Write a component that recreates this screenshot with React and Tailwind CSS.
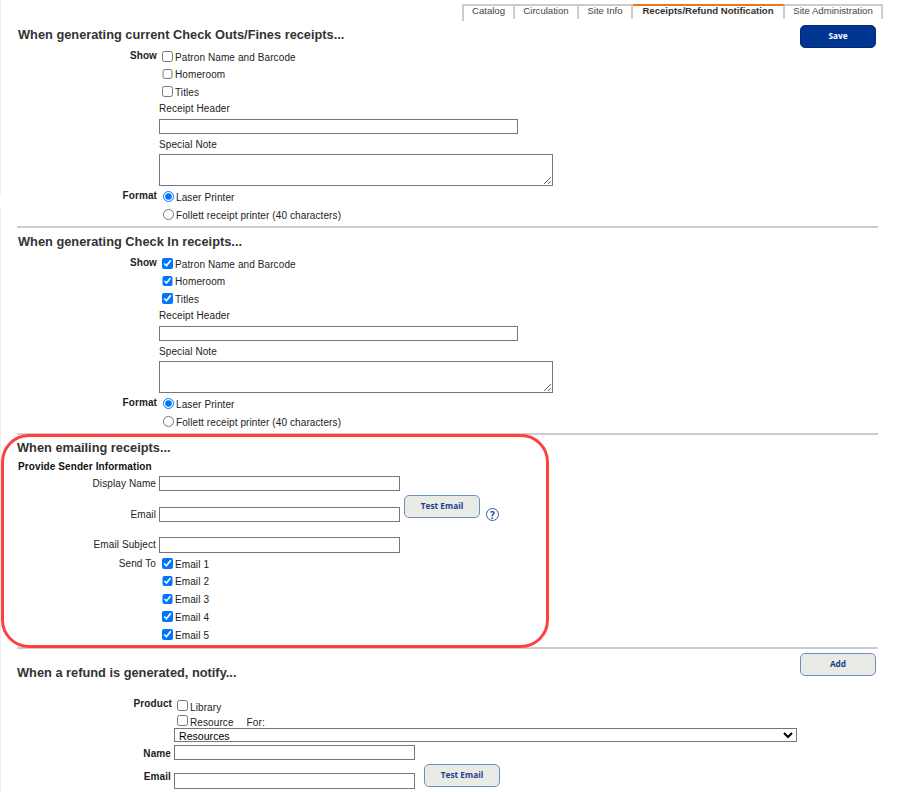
const TXT = "text-[10px] text-[#222] tracking-[0.1px]";
const BOLD = "font-bold text-[10px] text-[#222] tracking-[0.1px]";

function Tab({ children, active, className = "" }) {
  return (
    <div className={(active
      ? "border-t-2 border-t-[#e87722] font-bold text-[#333] "
      : "border-t-2 border-t-[#ccc] text-[#444] ") + "h-[15px] pb-[2px] border-r-2 border-r-[#ccc] flex items-center justify-center text-[9.6px] " + className}>
      {children}
    </div>
  );
}

function Btn({ children, primary, className = "" }) {
  return (
    <button className={"w-[76px] h-[23px] rounded-[5px] flex items-center justify-center font-['Open_Sans',sans-serif] font-bold text-[8.3px] shrink-0 " +
      (primary ? "bg-[#003591] border border-[#002a75] text-white " : "bg-[#ebebe6] border border-[#6d8dc4] text-[#1a3f8f] ") + className}>
      {children}
    </button>
  );
}

function Check({ checked, label, tight }) {
  return (
    <label className={"flex items-start " + (tight ? "h-[17.5px]" : "h-[17.75px]")}>
      <input type="checkbox" defaultChecked={checked} className="w-[10.5px] h-[10.5px] m-0 mt-[2px]" />
      <span className={"ml-[2.5px] mt-[2.5px] leading-[12px] " + TXT}>{label}</span>
    </label>
  );
}

function Radio({ checked, label, name }) {
  return (
    <label className="flex items-start h-[18px]">
      <input type="radio" name={name} defaultChecked={checked} className="w-[11px] h-[11px] m-0 mt-[2px] ml-px" />
      <span className={"ml-[2px] mt-[3px] leading-[12px] " + TXT}>{label}</span>
    </label>
  );
}

function Heading({ children, className = "" }) {
  return <h2 className={"font-bold text-[12.8px] leading-[18px] text-[#333] " + className}>{children}</h2>;
}

function Rule() {
  return <hr className="mt-px ml-[17px] w-[861px] h-[2px] border-0 bg-[#ccc]" />;
}

function ReceiptOptions({ checked, name }) {
  return (
    <div>
      <div className="flex h-[53px]">
        <div className={"w-[157px] text-right leading-[12px] mt-px " + BOLD}>Show</div>
        <div className="ml-[5px]">
          <Check tight checked={checked} label="Patron Name and Barcode" />
          <Check tight checked={checked} label="Homeroom" />
          <Check tight checked={checked} label="Titles" />
        </div>
      </div>
      <div className="ml-[159px]">
        <div className={"mt-px leading-[12px] " + TXT}>Receipt Header</div>
        <input type="text" className="block mt-[4px] w-[359px] h-[15px] border border-[#767676] bg-white" />
        <div className={"mt-[5px] leading-[12px] " + TXT}>Special Note</div>
        <textarea className="block mt-[3px] w-[394px] h-[32px] border border-[#767676] bg-white" />
      </div>
      <div className="flex mt-[3px] h-[36px]">
        <div className={"w-[157px] text-right leading-[12px] mt-px " + BOLD}>Format</div>
        <div className="ml-[5px]">
          <Radio name={name} checked label="Laser Printer" />
          <Radio name={name} label="Follett receipt printer (40 characters)" />
        </div>
      </div>
    </div>
  );
}

function FieldLabel({ children, className = "" }) {
  return <div className={"w-[156px] shrink-0 text-right leading-[15px] " + TXT + " " + className}>{children}</div>;
}

function HelpIcon() {
  return (
    <span className="shrink-0 mt-[13px] ml-[6px] w-[13px] h-[13px] rounded-full border border-[#2f5da8] flex items-center justify-center font-['Open_Sans',sans-serif] font-bold text-[10px] leading-none text-[#1a3f8f]">
      ?
    </span>
  );
}

export default function App() {
  return (
    <div className="relative w-[900px] h-[792px] overflow-hidden bg-white font-['Liberation_Sans',Arial,sans-serif]">
      <div className="absolute left-0 top-0 h-[194px] w-px bg-[#eeeee8]" />
      <div className="absolute left-0 top-[208px] bottom-0 w-px bg-[#eeeee8]" />
      {/* Tabs */}
      <div className="h-[21px] pt-[4px] flex justify-end pr-[17px]">
        <div className="flex border-l-2 border-l-[#ccc]">
          <Tab className="w-[51px]">Catalog</Tab>
          <Tab className="w-[64px]">Circulation</Tab>
          <Tab className="w-[54px]">Site Info</Tab>
          <Tab active className="w-[152px]">Receipts/Refund Notification</Tab>
          <Tab className="w-[98px]">Site Administration</Tab>
        </div>
      </div>

      {/* Check outs */}
      <section>
        <div className="h-[28px] flex items-center justify-between pl-[18px] pr-[24px]">
          <Heading>When generating current Check Outs/Fines receipts...</Heading>
          <Btn primary className="self-end mb-px">Save</Btn>
        </div>
        <ReceiptOptions name="fmt1" />
        <Rule />
      </section>

      {/* Check in */}
      <section>
        <div className="h-[28px] flex items-center pl-[18px]">
          <Heading>When generating Check In receipts...</Heading>
        </div>
        <ReceiptOptions checked name="fmt2" />
        <Rule />
      </section>

      {/* Emailing */}
      <section className="relative">
        <div className="absolute left-[1px] -top-[1px] w-[548px] h-[214px] border-[3px] border-[#ff4040] rounded-[28px] pointer-events-none" />
        <Heading className="pl-[17px] pt-[4px]">When emailing receipts...</Heading>
        <div className="pl-[18px] mt-[3px] leading-[14px] font-bold text-[10px] text-[#111] tracking-[0.1px]">Provide Sender Information</div>
        <div className="mt-[2px]">
          <div className="flex h-[15px]">
            <FieldLabel>Display Name</FieldLabel>
            <input type="text" className="ml-[3px] w-[241px] h-[15px] border border-[#767676] bg-white" />
          </div>
          <div className="flex h-[42px] mt-[4px]">
            <FieldLabel className="mt-[12px]">Email</FieldLabel>
            <input type="text" className="ml-[3px] mt-[12px] w-[241px] h-[15px] border border-[#767676] bg-white" />
            <Btn className="ml-[4px]">Test Email</Btn>
            <HelpIcon />
          </div>
          <div className="flex h-[16px]">
            <FieldLabel>Email Subject</FieldLabel>
            <input type="text" className="ml-[3px] w-[241px] h-[16px] border border-[#767676] bg-white" />
          </div>
        </div>
        <div className="flex mt-[3px] h-[91px]">
          <FieldLabel>Send To</FieldLabel>
          <div className="ml-[6px]">
            <Check checked label="Email 1" />
            <Check checked label="Email 2" />
            <Check checked label="Email 3" />
            <Check checked label="Email 4" />
            <Check checked label="Email 5" />
          </div>
        </div>
        <hr className="ml-[17px] w-[861px] h-[2px] border-0 bg-[#ccc]" />
      </section>

      {/* Refund */}
      <section>
        <div className="flex items-start justify-between pl-[17px] pr-[24px] h-[47px]">
          <Heading className="mt-[15px]">When a refund is generated, notify...</Heading>
          <Btn className="mt-[4px]">Add</Btn>
        </div>
        <div className="flex h-[32px]">
          <div className={"w-[172px] text-right leading-[14px] mt-px " + BOLD}>Product</div>
          <div className="ml-[5px] pt-[4px]">
            <label className="flex items-start h-[15px]">
              <input type="checkbox" className="w-[10.5px] h-[10.5px] m-0" />
              <span className={"ml-[2.5px] mt-[2px] leading-[12px] " + TXT}>Library</span>
            </label>
            <label className="flex items-start h-[13px]">
              <input type="checkbox" className="w-[10.5px] h-[10.5px] m-0" />
              <span className={"ml-[2.5px] mt-[2px] leading-[12px] " + TXT}>Resource</span>
              <span className={"ml-[13px] mt-[2px] leading-[12px] " + TXT}>For:</span>
            </label>
          </div>
        </div>
        <select defaultValue="Resources" className="block ml-[174px] w-[623px] h-[14px] border border-[#767676] bg-white text-[10.6px] leading-none text-black p-0 pb-px">
          <option>Resources</option>
        </select>
        <div className="flex mt-[3px] h-[15px]">
          <div className={"w-[171px] text-right leading-[15px] mt-px " + BOLD}>Name</div>
          <input type="text" className="ml-[3px] w-[241px] h-[15px] border border-[#767676] bg-white" />
        </div>
        <div className="flex mt-[4px]">
          <div className={"w-[171px] text-right leading-[14px] mt-[6px] " + BOLD}>Email</div>
          <input type="text" className="ml-[3px] mt-[9px] w-[241px] h-[16px] border border-[#767676] bg-white" />
          <Btn className="ml-[9px]">Test Email</Btn>
        </div>
      </section>
    </div>
  );
}
